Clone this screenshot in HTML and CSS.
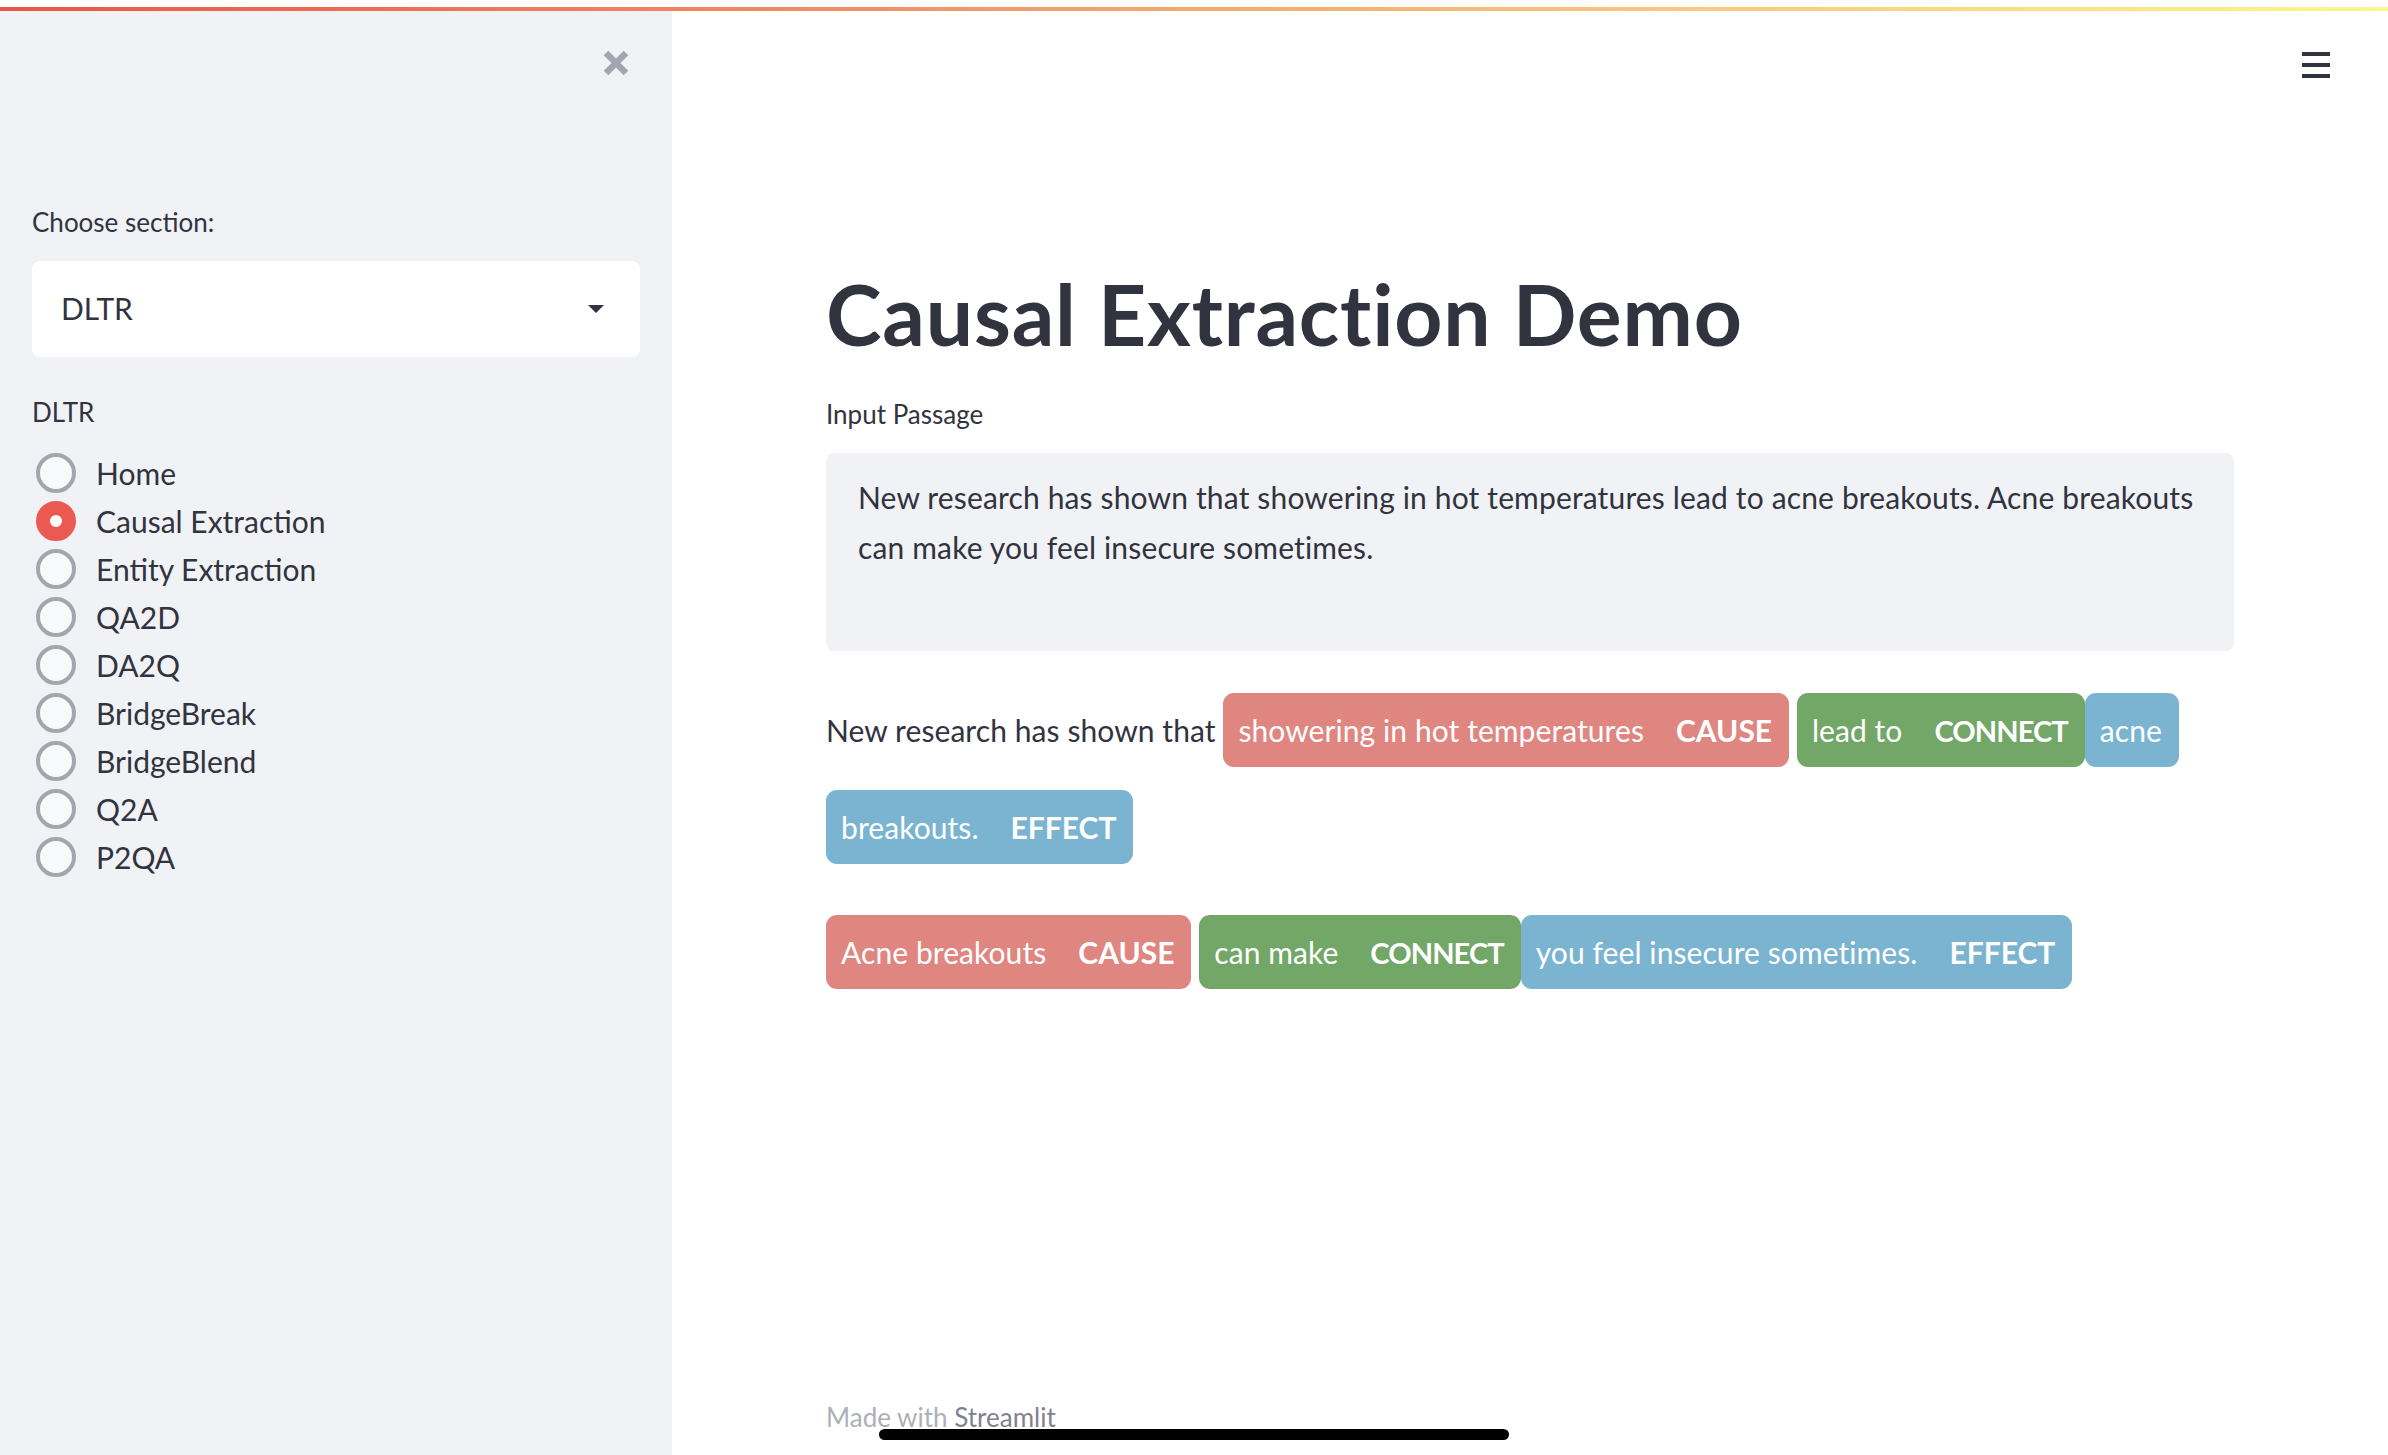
FILE: index.html
```html
<!DOCTYPE html>
<html lang="en">
<head>
<meta charset="utf-8">
<title>Causal Extraction Demo</title>
<link rel="stylesheet" href="styles.css">
</head>
<body>
<div class="decoration"></div>
<div class="app">
  <aside class="sidebar">
    <div class="sidebar-top">
      <button class="icon-btn close" aria-label="Close sidebar">
        <svg width="28" height="28" viewBox="0 0 28 28"><path class="close-x" d="M4 4 L24 24 M24 4 L4 24"/></svg>
      </button>
    </div>
    <div class="widget-label label-choose">Choose section:</div>
    <div class="select">
      <span>DLTR</span>
      <svg class="caret" width="16" height="8" viewBox="0 0 16 8"><polygon points="0,0 16,0 8,8"/></svg>
    </div>
    <div class="widget-label label-radio">DLTR</div>
    <div class="radio-group">
      <div class="radio"><span class="dot"></span><span class="radio-text">Home</span></div>
      <div class="radio checked"><span class="dot"></span><span class="radio-text">Causal Extraction</span></div>
      <div class="radio"><span class="dot"></span><span class="radio-text">Entity Extraction</span></div>
      <div class="radio"><span class="dot"></span><span class="radio-text">QA2D</span></div>
      <div class="radio"><span class="dot"></span><span class="radio-text">DA2Q</span></div>
      <div class="radio"><span class="dot"></span><span class="radio-text">BridgeBreak</span></div>
      <div class="radio"><span class="dot"></span><span class="radio-text">BridgeBlend</span></div>
      <div class="radio"><span class="dot"></span><span class="radio-text">Q2A</span></div>
      <div class="radio"><span class="dot"></span><span class="radio-text">P2QA</span></div>
    </div>
  </aside>
  <main class="main">
    <header class="header">
      <button class="icon-btn menu" aria-label="Menu">
        <svg width="28" height="26" viewBox="0 0 28 26"><rect x="0" y="0" width="28" height="4"/><rect x="0" y="11" width="28" height="4"/><rect x="0" y="22" width="28" height="4"/></svg>
      </button>
    </header>
    <div class="block">
      <h1 class="title">Causal Extraction Demo</h1>
      <div class="widget-label label-input">Input Passage</div>
      <div class="textarea">New research has shown that showering in hot temperatures lead to acne breakouts. Acne breakouts can make you feel insecure sometimes.</div>
      <p class="annot annot-first">New research has shown that <mark class="ent cause">showering in hot temperatures<span class="tag">Cause</span></mark> <mark class="ent connect">lead to<span class="tag">Connect</span></mark><mark class="ent effect">acne breakouts.<span class="tag">Effect</span></mark></p>
      <p class="annot annot-second"><mark class="ent cause">Acne breakouts<span class="tag">Cause</span></mark> <mark class="ent connect">can make<span class="tag">Connect</span></mark><mark class="ent effect">you feel insecure sometimes.<span class="tag">Effect</span></mark></p>
    </div>
    <footer class="footer"><span class="made">Made with </span><span class="brand">Streamlit</span></footer>
  </main>
</div>
<div class="home-indicator"></div>
</body>
</html>
```

FILE: styles.css
```css
html, body {
  margin: 0;
  padding: 0;
}

body {
  background: #ffffff;
  color: #31333f;
  font-family: Lato, "Liberation Sans", sans-serif;
  padding-top: 7px;
  overflow: hidden;
}

.decoration {
  height: 4px;
  background: linear-gradient(90deg, #e9554e 0%, #f3a871 50%, #fdf78c 100%);
}

.app {
  display: flex;
  height: 1444px;
}

/* ---------- sidebar ---------- */
.sidebar {
  flex: none;
  width: 672px;
  box-sizing: border-box;
  padding: 0 32px;
  background: #f0f2f6;
}

.sidebar-top {
  display: flex;
  justify-content: flex-end;
  padding-top: 38px;
}

.icon-btn {
  border: 0;
  padding: 0;
  margin: 0;
  background: transparent;
  display: block;
  line-height: 0;
}

.close {
  margin-right: 10px;
}

.close-x {
  stroke: #a3a6b0;
  stroke-width: 6.5;
  fill: none;
}

.widget-label {
  font-size: 26px;
  line-height: 36px;
  color: #31333f;
}

.label-choose {
  margin-top: 127px;
}

.select {
  margin-top: 21px;
  height: 96px;
  box-sizing: border-box;
  background: #ffffff;
  border-radius: 8px;
  display: flex;
  align-items: center;
  justify-content: space-between;
  padding: 0 36px 0 29px;
  font-size: 30px;
  line-height: 36px;
}

.select span {
  margin-top: -2px;
}

.caret polygon {
  fill: #31333f;
}

.label-radio {
  margin-top: 37px;
}

.radio-group {
  margin-top: 19px;
  display: flex;
  flex-direction: column;
}

.radio {
  height: 48px;
  display: flex;
  align-items: center;
  padding-left: 4px;
}

.dot {
  flex: none;
  width: 40px;
  height: 40px;
  box-sizing: border-box;
  border-radius: 50%;
  border: 4px solid #a4a6af;
  background: #f9fafb;
  display: flex;
  align-items: center;
  justify-content: center;
}

.radio.checked .dot {
  background: #ea5a52;
  border-color: #ea5a52;
}

.radio.checked .dot::after {
  content: "";
  width: 12px;
  height: 12px;
  border-radius: 50%;
  background: #ffffff;
}

.radio-text {
  margin-left: 20px;
  font-size: 30px;
  line-height: 48px;
}

/* ---------- main ---------- */
.main {
  flex: 1;
  display: flex;
  flex-direction: column;
  min-width: 0;
}

.header {
  display: flex;
  justify-content: flex-end;
  padding: 41px 58px 0 0;
}

.menu rect {
  fill: #31333f;
}

.block {
  width: 1408px;
  margin: 0 auto;
  padding-top: 187px;
}

.title {
  margin: 0;
  font-size: 84px;
  line-height: 98px;
  font-weight: 700;
  letter-spacing: 0.8px;
  color: #31333f;
}

.label-input {
  margin-top: 33px;
}

.textarea {
  margin-top: 21px;
  height: 198px;
  box-sizing: border-box;
  padding: 19px 32px 16px;
  background: #f0f2f6;
  border-radius: 8px;
  font-size: 30px;
  line-height: 50px;
  letter-spacing: 0.15px;
}

.annot {
  margin: 0;
  font-size: 30px;
  line-height: 96px;
  letter-spacing: 0.08px;
}

.annot-first {
  margin-top: 31px;
}

.annot-second {
  margin-top: 29px;
}

.ent {
  color: #ffffff;
  padding: 19px 17px 19px 15px;
  border-radius: 11px;
  -webkit-box-decoration-break: clone;
  box-decoration-break: clone;
}

.cause {
  background: #e08681;
}

.connect {
  background: #73a768;
}

.effect {
  background: #7ab4d1;
}

.tag {
  margin-left: 32px;
  font-size: 30px;
  font-weight: 700;
  letter-spacing: 0;
  text-transform: uppercase;
}

.connect .tag {
  font-size: 29px;
  letter-spacing: -0.9px;
}

.footer {
  margin: auto auto 0;
  width: 1408px;
  padding-bottom: 20px;
  font-size: 26px;
  line-height: 36px;
}

.made {
  color: #aeb0b8;
}

.brand {
  color: #7f828e;
}

.home-indicator {
  position: fixed;
  left: 879px;
  top: 1429px;
  width: 630px;
  height: 11px;
  border-radius: 6px;
  background: #000000;
}
```
